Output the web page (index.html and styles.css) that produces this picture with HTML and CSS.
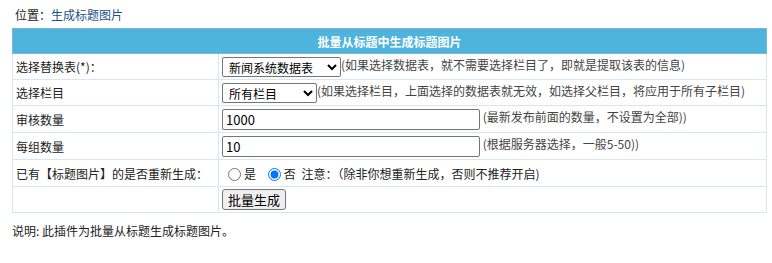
FILE: index.html
```html
<!DOCTYPE html>
<html lang="zh-CN">
  <head>
    <meta charset="UTF-8">
    <title>生成标题图片</title>
    <link rel="stylesheet" href="styles.css">
  </head>
  <body>
    <div class="crumb">位置：<a href="#">生成标题图片</a></div>

    <form action="">
      <table class="grid">
        <tr><th colspan="2">批量从标题中生成标题图片</th></tr>
        <tr>
          <td class="lbl">选择替换表(*)：</td>
          <td>
            <select class="sel-table"><option>新闻系统数据表</option></select><span class="tip">(如果选择数据表，就不需要选择栏目了，即就是提取该表的信息)</span>
          </td>
        </tr>
        <tr>
          <td class="lbl">选择栏目</td>
          <td>
            <select class="sel-class"><option>所有栏目</option></select><span class="tip">(如果选择栏目，上面选择的数据表就无效，如选择父栏目，将应用于所有子栏目)</span>
          </td>
        </tr>
        <tr class="row-input">
          <td class="lbl">审核数量</td>
          <td><input type="text" class="txt" value="1000"> <span class="tip">(最新发布前面的数量，不设置为全部))</span></td>
        </tr>
        <tr class="row-input">
          <td class="lbl">每组数量</td>
          <td><input type="text" class="txt" value="10"> <span class="tip">(根据服务器选择，一般5-50))</span></td>
        </tr>
        <tr class="row-input">
          <td class="lbl">已有【标题图片】的是否重新生成：</td>
          <td>
            <label class="opt"><input type="radio" name="regen">是</label>
            <label class="opt"><input type="radio" name="regen" checked>否</label>
            注意：（除非你想重新生成，否则不推荐开启)
          </td>
        </tr>
        <tr>
          <td class="lbl"></td>
          <td><input type="button" class="btn" value="批量生成"></td>
        </tr>
      </table>
    </form>

    <div class="note">说明: 此插件为批量从标题生成标题图片。</div>
  </body>
</html>
```
FILE: styles.css
```css
body { margin: 0; padding: 6px 6px 0 12px; background: #fff; color: #222 }
body, input, select { font-family: "Microsoft YaHei", "Noto Sans CJK SC", sans-serif; font-size: 12px }

.crumb { height: 22px; line-height: 18px; padding-left: 3px }
.crumb a { color: #1d4f8a; text-decoration: none }

form { margin: 0 }

.grid { width: 755px; border-collapse: collapse; border: 1px solid #7ab7d6 }
.grid th { background: #4eb4dd; color: #fff; height: 24px; font-weight: bold; text-align: center; padding: 0; border: 1px solid #7ab7d6 }
.grid td { border: 1px solid #d2e9f3; padding: 0 3px; height: 25px; white-space: nowrap }
.grid .row-input td { height: 26px }
.grid td.lbl { width: 199px }

.tip { color: #444 }

select { height: 20px; padding: 0 2px; border: 1px solid #767676; border-radius: 2px; background: #fff; color: #000; vertical-align: middle; margin: 0 }
.sel-table { width: 119px }
.sel-class { width: 95px }

.txt { width: 258px; height: 21px; padding: 0 3px; border: 1px solid #767676; border-radius: 2px; box-sizing: border-box; margin: 0; vertical-align: middle; font-size: 13px }

.opt { margin-left: 3px; margin-right: 3px }
.opt input { margin: 0 3px 0 3px; vertical-align: -2px }

.btn { height: 21px; padding: 0 5px; border: 1px solid #767676; border-radius: 3px; background: #efefef; margin: 0; font-size: 13px }

.note { padding-top: 9px; line-height: 18px }
```
